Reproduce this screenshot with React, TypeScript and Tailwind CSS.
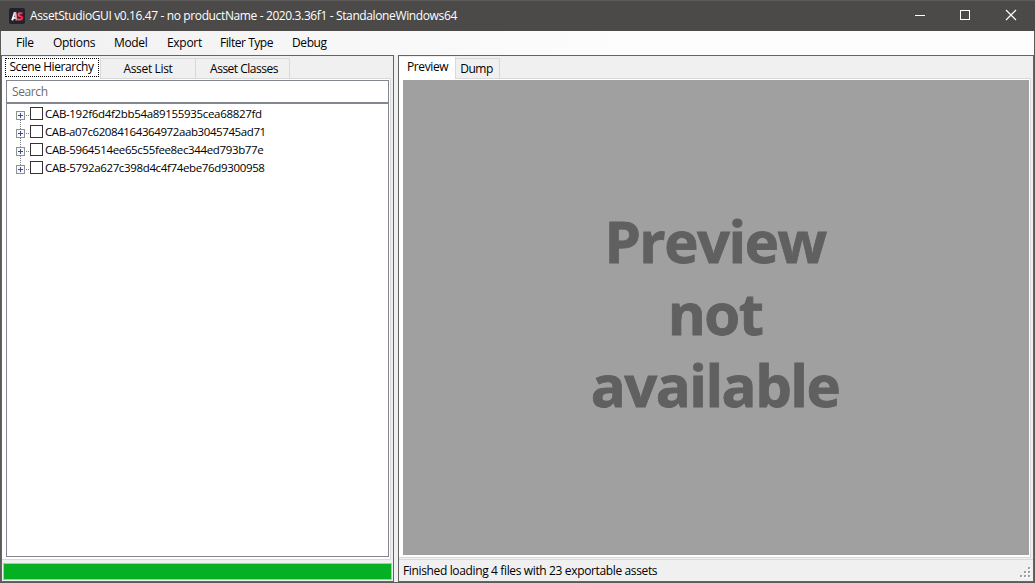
import type { ReactNode } from 'react'

const menuItems = [
  { label: 'File', className: 'w-[37px] tracking-[-0.3px]' },
  { label: 'Options', className: 'w-[61px] tracking-[-0.3px]' },
  { label: 'Model', className: 'w-[53px] tracking-[-0.35px]' },
  { label: 'Export', className: 'w-[53px] tracking-[-0.3px]' },
  { label: 'Filter Type', className: 'w-[72px] tracking-[-0.45px]' },
  { label: 'Debug', className: 'w-[60px] tracking-[-0.4px]' },
]

const sceneNodes = [
  { name: 'CAB-192f6d4f2bb54a89155935cea68827fd', className: 'tracking-[-0.32px]' },
  { name: 'CAB-a07c62084164364972aab3045745ad71', className: 'tracking-[-0.4px]' },
  { name: 'CAB-5964514ee65c55fee8ec344ed793b77e', className: 'tracking-[-0.36px]' },
  { name: 'CAB-5792a627c398d4c4f74ebe76d9300958', className: 'tracking-[-0.35px]' },
]

function AppIcon() {
  return (
    <svg width="16" height="16" viewBox="0 0 16 16" className="-mt-px shrink-0">
      <defs>
        <linearGradient id="letterA" x1="0" x2="1">
          <stop offset="0.2" stopColor="#ffffff" />
          <stop offset="1" stopColor="#e58a98" />
        </linearGradient>
        <linearGradient id="letterS" x1="0" x2="1">
          <stop offset="0" stopColor="#ff5f6a" />
          <stop offset="1" stopColor="#fb1748" />
        </linearGradient>
      </defs>
      <rect width="16" height="16" rx="2" fill="#1f232d" />
      <g fill="none" strokeWidth="1.9">
        <path d="M3.2 12.4 5.6 4.9h.9l1.2 7.5M4.3 10h3" stroke="url(#letterA)" />
        <path d="M13.6 5.3h-2.9c-1.5 0-1.6 2.4-.2 2.8l1.9.5c1.5.6 1 2.9-.6 2.9H8.8" stroke="url(#letterS)" />
      </g>
    </svg>
  )
}

function TitleBar() {
  return (
    <header className="flex h-[31px] shrink-0 items-center border-t border-[#5c5b59] bg-[#4b4a48] pl-[9px] text-white">
      <AppIcon />
      <span className="ml-[5px] flex-1 tracking-[-0.375px]">
        AssetStudioGUI v0.16.47 - no productName - 2020.3.36f1 - StandaloneWindows64
      </span>
      <svg width="138" height="30" viewBox="0 0 138 30" fill="none" stroke="white" shapeRendering="crispEdges">
        <path d="M18 14.5h10" />
        <rect x="63.5" y="9.5" width="9" height="9" />
        <path d="m109 9 10 10m0-10-10 10" strokeWidth="1.2" shapeRendering="auto" />
      </svg>
    </header>
  )
}

function MenuBar() {
  return (
    <nav className="flex h-6 shrink-0 items-center bg-linear-to-r from-[#f0f0f0] to-[#fdfdfd] to-60% pl-[15px]">
      {menuItems.map((item) => (
        <span key={item.label} className={`whitespace-nowrap ${item.className}`}>
          {item.label}
        </span>
      ))}
    </nav>
  )
}

function Tab({ className, children }: { className: string; children: ReactNode }) {
  return (
    <div className={`mt-px flex h-5 items-center justify-center whitespace-nowrap border-t border-r border-[#d9d9d9] bg-[#f0f0f0] ${className}`}>
      {children}
    </div>
  )
}

type TreeNodeProps = { name: string; className: string; first: boolean; last: boolean }

function TreeNode({ name, className, first, last }: TreeNodeProps) {
  return (
    <li className="flex h-[18px] items-center">
      <svg width="23" height="18" viewBox="0 0 23 18" fill="none" shapeRendering="crispEdges" className="shrink-0">
        {!last && <path d="M13.5 15v3" stroke="#808080" strokeDasharray="1 1" />}
        {!first && <path d="M13.5 1v5" stroke="#808080" strokeDasharray="1 1" />}
        <path d="M19 10.5h4" stroke="#808080" strokeDasharray="1 1" />
        <rect x="9.5" y="6.5" width="8" height="8" fill="#f8f8f8" stroke="#919191" />
        <path d="M11 10.5h5M13.5 8v5" stroke="#33509c" />
      </svg>
      <span className="-mt-px h-[13px] w-[13px] shrink-0 border border-[#333]" />
      <span className={`ml-[2px] text-[11.5px] ${className}`}>{name}</span>
    </li>
  )
}

function HierarchyPanel() {
  return (
    <section className="flex w-[393px] flex-col border border-[#646464] bg-[#f0f0f0]">
      <div className="z-10 -mb-px flex h-[23px] pt-px">
        <div className="h-[22px] w-[99px] border-r border-[#d9d9d9] bg-white pt-px pl-[3px]">
          <div className="flex h-[19px] w-[94px] items-center justify-center border border-dotted border-black pr-px pb-px whitespace-nowrap tracking-[-0.43px]">
            Scene Hierarchy
          </div>
        </div>
        <Tab className="w-[95px] tracking-[-0.35px]">Asset List</Tab>
        <Tab className="w-[94px] pl-[3px] tracking-[-0.5px]">Asset Classes</Tab>
      </div>
      <div className="mr-[2px] flex h-[482px] flex-col border border-l-0 border-[#d9d9d9] bg-white pt-px pr-px pb-[2px] pl-1">
        <div className="flex h-[23px] items-center border border-[#828790] pl-[5px] tracking-[-0.4px] text-[#6d6d6d]">Search</div>
        <ul className="flex-1 border border-[#828790] pt-px">
          {sceneNodes.map((node, i) => (
            <TreeNode key={node.name} {...node} first={i === 0} last={i === sceneNodes.length - 1} />
          ))}
        </ul>
      </div>
      <div className="mx-px mt-[3px] h-[17px] border border-[#bcbcbc] bg-[#06b025]" />
    </section>
  )
}

function SizeGrip() {
  return (
    <svg width="11" height="11" viewBox="0 0 11 11" shapeRendering="crispEdges">
      <path d="M9 1h2v2H9zM5 5h2v2H5zM9 5h2v2H9zM1 9h2v2H1zM5 9h2v2H5zM9 9h2v2H9z" fill="#fff" />
      <path d="M8 0h2v2H8zM4 4h2v2H4zM8 4h2v2H8zM0 8h2v2H0zM4 8h2v2H4zM8 8h2v2H8z" fill="#a0a0a0" />
    </svg>
  )
}

function PreviewPanel() {
  return (
    <section className="flex w-[636px] flex-col border border-[#646464] bg-[#f0f0f0]">
      <div className="z-10 -mb-px flex h-[23px] pt-px">
        <div className="h-[22px] w-[57px] border-r border-[#d9d9d9] bg-white pt-[2px] pl-2 tracking-[-0.4px]">Preview</div>
        <Tab className="w-[44px] pr-[2px] tracking-[-0.45px]">Dump</Tab>
      </div>
      <div className="mr-[2px] h-[480px] border border-l-0 border-[#d9d9d9] bg-white pt-px pr-px pb-[2px] pl-1">
        <div className="flex h-full flex-col items-center justify-center bg-[#a0a0a0] pr-[2px] pb-[10px] text-[58px] leading-[72px] font-bold tracking-[-1.5px] text-[#606060] [-webkit-text-stroke:0.8px_#606060]">
          <span>Preview</span>
          <span>not</span>
          <span>available</span>
        </div>
      </div>
      <footer className="mt-px flex flex-1 items-center justify-between border-t border-[#d9d9d9] pr-[2px] pl-1">
        <span className="tracking-[-0.36px]">Finished loading 4 files with 23 exportable assets</span>
        <div className="pt-1">
          <SizeGrip />
        </div>
      </footer>
    </section>
  )
}

export default function App() {
  return (
    <div className="flex h-[583px] w-[1035px] flex-col overflow-hidden bg-[#5c5b59] font-['Open_Sans','Noto_Sans',sans-serif] text-[12px] leading-4 text-black">
      <TitleBar />
      <div className="mx-px mb-px flex flex-1 flex-col bg-[#f0f0f0]">
        <MenuBar />
        <main className="flex flex-1 justify-between">
          <HierarchyPanel />
          <PreviewPanel />
        </main>
      </div>
    </div>
  )
}
